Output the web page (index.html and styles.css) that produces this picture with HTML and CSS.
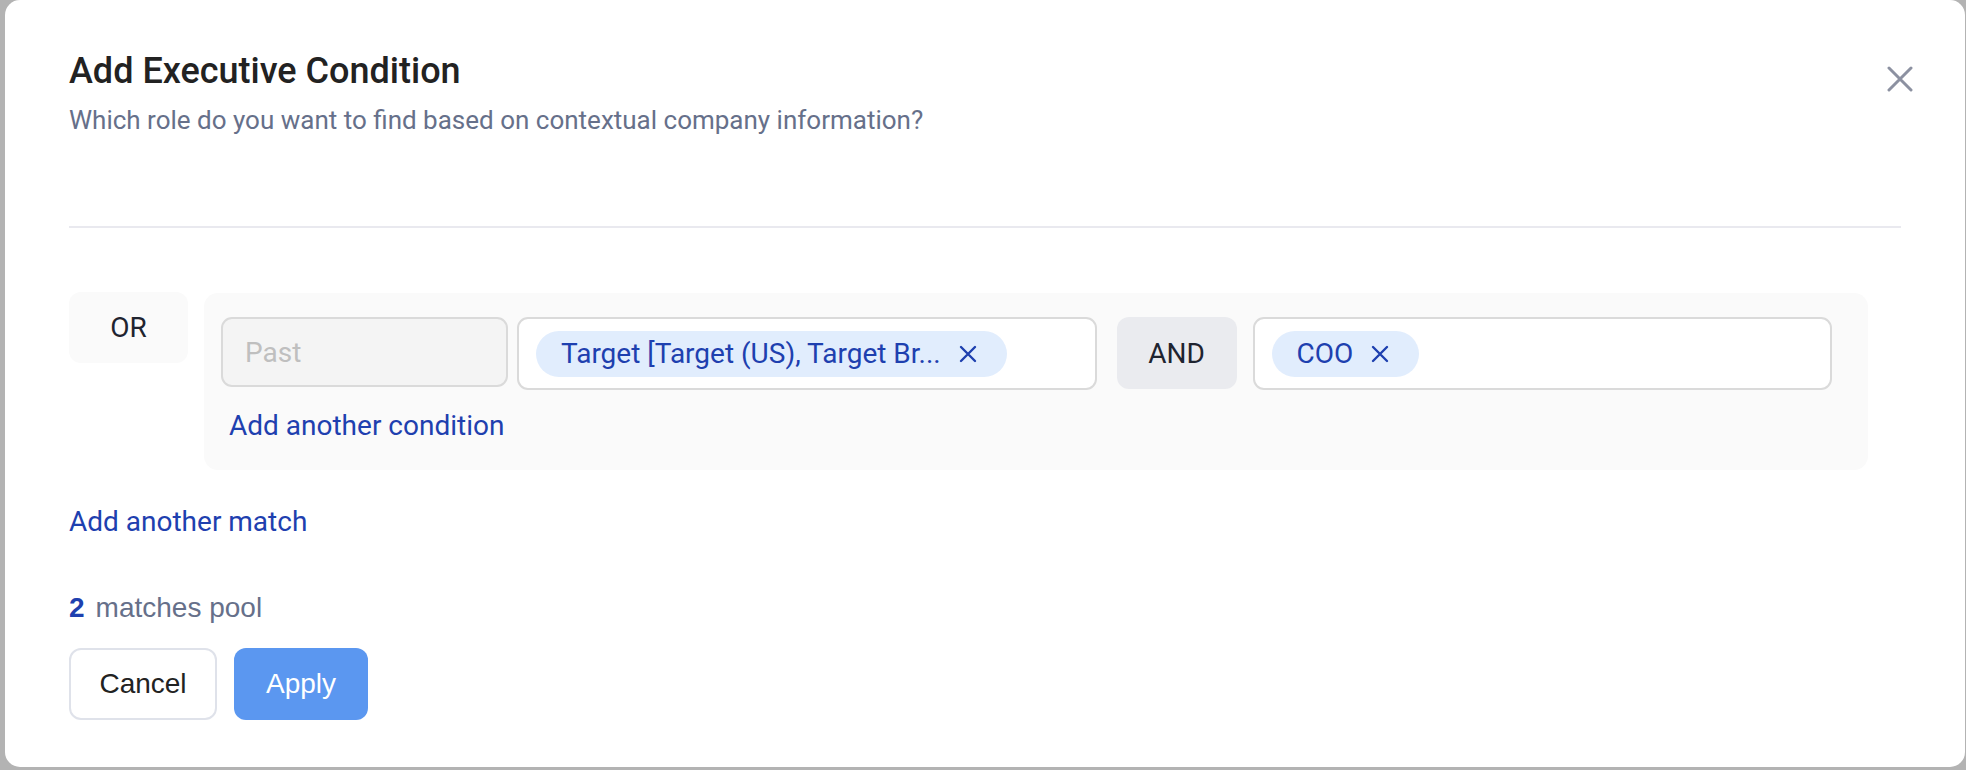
FILE: index.html
```html
<!DOCTYPE html>
<html lang="en">
<head>
<meta charset="utf-8">
<title>Add Executive Condition</title>
<link rel="stylesheet" href="styles.css">
</head>
<body>
<div class="overlay">
  <div class="modal">
    <button class="close" aria-label="Close">
      <svg width="26" height="26" viewBox="0 0 26 26"><path d="M2 2 L24 24 M24 2 L2 24" stroke="#8c91a1" stroke-width="3" stroke-linecap="round" fill="none"/></svg>
    </button>
    <h2 class="title">Add Executive Condition</h2>
    <p class="subtitle">Which role do you want to find based on contextual company information?</p>
    <div class="sep"></div>
    <div class="match-row">
      <div class="logic or">OR</div>
      <div class="group">
        <div class="cond-row">
          <div class="select past">Past</div>
          <div class="tag-input">
            <span class="chip">Target [Target (US), Target Br...<svg class="chip-x" width="18" height="18" viewBox="0 0 18 18"><path d="M2 2 L16 16 M16 2 L2 16" stroke="#1e40af" stroke-width="2.4" stroke-linecap="round" fill="none"/></svg></span>
          </div>
          <div class="logic and">AND</div>
          <div class="tag-input">
            <span class="chip">COO<svg class="chip-x" width="18" height="18" viewBox="0 0 18 18"><path d="M2 2 L16 16 M16 2 L2 16" stroke="#1e40af" stroke-width="2.4" stroke-linecap="round" fill="none"/></svg></span>
          </div>
        </div>
        <a class="link add-cond">Add another condition</a>
      </div>
    </div>
    <a class="link add-match">Add another match</a>
    <div class="pool"><span class="num">2</span><span class="pool-label">matches pool</span></div>
    <div class="actions">
      <button class="btn cancel">Cancel</button>
      <button class="btn apply">Apply</button>
    </div>
  </div>
</div>
</body>
</html>
```
FILE: styles.css
```css
html, body {
  margin: 0;
  padding: 0;
}
body {
  background: #b3b3b3;
  width: 1966px;
  height: 770px;
  overflow: hidden;
  font-family: Roboto, "Noto Sans", sans-serif;
}
.overlay {
  display: flex;
  padding-left: 5px;
}
.modal {
  position: relative;
  box-sizing: border-box;
  width: 1960px;
  background: #ffffff;
  border-radius: 15px;
  padding: 50px 64px 47px 64px;
  display: flex;
  flex-direction: column;
  align-items: flex-start;
}
.close {
  position: absolute;
  top: 66px;
  right: 52px;
  width: 26px;
  height: 26px;
  padding: 0;
  border: 0;
  background: transparent;
  display: flex;
}
.title {
  margin: 0;
  font-size: 36px;
  line-height: 42px;
  font-weight: 500;
  color: #222222;
}
.subtitle {
  margin: 12px 0 0 0;
  font-size: 26px;
  line-height: 32px;
  color: #66708a;
}
.sep {
  align-self: stretch;
  height: 2px;
  background: #e9e9ef;
  margin-top: 90px;
}
.match-row {
  align-self: stretch;
  display: flex;
  align-items: flex-start;
  gap: 16px;
  margin-top: 64px;
  padding-right: 33px;
}
.logic {
  box-sizing: border-box;
  display: flex;
  align-items: center;
  justify-content: center;
  font-size: 28px;
  color: #1f2430;
  border-radius: 12px;
}
.logic.or {
  width: 119px;
  height: 71px;
  background: #fafafa;
}
.logic.and {
  width: 120px;
  height: 72px;
  background: #eaebef;
  margin: 0 16px 0 20px;
}
.group {
  flex: 1;
  background: #fafafa;
  border-radius: 14px;
  padding: 24px 36px 24px 17px;
  display: flex;
  flex-direction: column;
  align-items: flex-start;
  margin-top: 1px;
}
.cond-row {
  align-self: stretch;
  display: flex;
  align-items: flex-start;
}
.select {
  box-sizing: border-box;
  width: 287px;
  height: 70px;
  border: 2px solid #dadada;
  border-radius: 11px;
  background: #f4f4f4;
  color: #bfbfbf;
  font-size: 28px;
  display: flex;
  align-items: center;
  padding-left: 22px;
  margin-right: 9px;
}
.tag-input {
  box-sizing: border-box;
  flex: 1;
  height: 73px;
  border: 2px solid #dadada;
  border-radius: 11px;
  background: #ffffff;
  display: flex;
  align-items: center;
  padding-left: 17px;
}
.chip {
  display: inline-flex;
  align-items: center;
  height: 46px;
  box-sizing: border-box;
  padding: 0 30px 0 25px;
  border-radius: 23px;
  background: #e1edfd;
  color: #1e40af;
  font-size: 28px;
  white-space: nowrap;
}
.chip-x {
  margin-left: 18px;
  flex: none;
}
.link {
  color: #1e40af;
  font-size: 28px;
  line-height: 40px;
  text-decoration: none;
}
.add-cond {
  margin-top: 16px;
  margin-left: 8px;
}
.add-match {
  margin-top: 32px;
}
.pool {
  margin-top: 46px;
  font-family: "Liberation Sans", Arial, sans-serif;
  font-size: 28px;
  line-height: 40px;
  display: flex;
}
.num {
  color: #1e40af;
  font-weight: 700;
  margin-right: 11px;
}
.pool-label {
  color: #66708a;
}
.actions {
  display: flex;
  gap: 17px;
  margin-top: 20px;
}
.btn {
  box-sizing: border-box;
  height: 72px;
  border-radius: 12px;
  font-family: "Liberation Sans", Arial, sans-serif;
  font-size: 28px;
  padding: 0;
}
.cancel {
  width: 148px;
  background: #ffffff;
  border: 2px solid #dfe2ea;
  color: #222222;
}
.apply {
  width: 134px;
  background: #5b97f0;
  border: 0;
  color: #ffffff;
}
```
